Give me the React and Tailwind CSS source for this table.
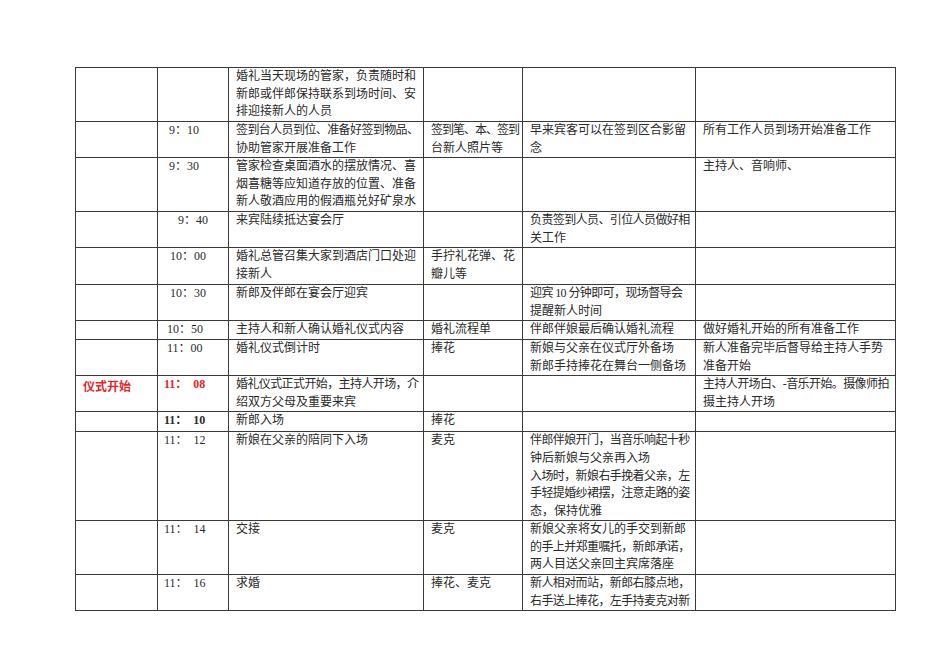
import React from 'react';

const rows = [
  { h: 'h-[54px]', time: '', content: ['婚礼当天现场的管家，负责随时和', '新郎或伴郎保持联系到场时间、安', '排迎接新人的人员'], items: [], note: [], staff: [] },
  { h: 'h-[36px]', time: '9：10', tp: 'pl-[11px]', content: ['签到台人员到位、准备好签到物品、', '协助管家开展准备工作'], items: ['签到笔、本、签到', '台新人照片等'], note: ['早来宾客可以在签到区合影留', '念'], staff: ['所有工作人员到场开始准备工作'] },
  { h: 'h-[53px]', time: '9：30', tp: 'pl-[11px]', content: ['管家检查桌面酒水的摆放情况、喜', '烟喜糖等应知道存放的位置、准备', '新人敬酒应用的假酒瓶兑好矿泉水'], items: [], note: [], staff: ['主持人、音响师、'] },
  { h: 'h-[35px]', time: '9：40', tp: 'pl-[20px]', content: ['来宾陆续抵达宴会厅'], items: [], note: ['负责签到人员、引位人员做好相', '关工作'], staff: [] },
  { h: 'h-[37px]', time: '10：00', tp: 'pl-[12px]', content: ['婚礼总管召集大家到酒店门口处迎', '接新人'], items: ['手拧礼花弹、花', '瓣儿等'], note: [], staff: [] },
  { h: 'h-[35px]', time: '10：30', tp: 'pl-[12px]', content: ['新郎及伴郎在宴会厅迎宾'], items: [], note: ['迎宾 10 分钟即可，现场督导会', '提醒新人时间'], staff: [] },
  { h: 'h-[18px]', time: '10：50', tp: 'pl-[9px]', content: ['主持人和新人确认婚礼仪式内容'], items: ['婚礼流程单'], note: ['伴郎伴娘最后确认婚礼流程'], staff: ['做好婚礼开始的所有准备工作'] },
  { h: 'h-[36px]', time: '11：00', tp: 'pl-[9px]', content: ['婚礼仪式倒计时'], items: ['捧花'], note: ['新娘与父亲在仪式厅外备场', '新郎手持捧花在舞台一侧备场'], staff: ['新人准备完毕后督导给主持人手势', '准备开始'] },
  { h: 'h-[36px]', label: '仪式开始', time: '11：  08', tp: 'pl-[6px]', red: true, bold: true, content: ['婚礼仪式正式开始，主持人开场，介', '绍双方父母及重要来宾'], items: [], note: [], staff: ['主持人开场白、-音乐开始。摄像师拍', '摄主持人开场'] },
  { h: 'h-[20px]', time: '11：  10', tp: 'pl-[6px]', bold: true, content: ['新郎入场'], items: ['捧花'], note: [], staff: [] },
  { h: 'h-[88px]', time: '11：  12', tp: 'pl-[6px]', content: ['新娘在父亲的陪同下入场'], items: ['麦克'], note: ['伴郎伴娘开门，当音乐响起十秒', '钟后新娘与父亲再入场', '入场时，新娘右手挽着父亲，左', '手轻提婚纱裙摆，注意走路的姿', '态，保持优雅'], staff: [] },
  { h: 'h-[54px]', time: '11：  14', tp: 'pl-[6px]', content: ['交接'], items: ['麦克'], note: ['新娘父亲将女儿的手交到新郎', '的手上并郑重嘱托，新郎承诺，', '两人目送父亲回主宾席落座'], staff: [] },
  { h: 'h-[36px]', time: '11：  16', tp: 'pl-[6px]', content: ['求婚'], items: ['捧花、麦克'], note: ['新人相对而站，新郎右膝点地，', '右手送上捧花，左手持麦克对新'], staff: [] },
];

// lines longer than the column allows get squeezed a little, as Word does
const Lines = ({ lines, max, squeeze = 'tracking-[-0.6px]' }) => (
  <>
    {lines.map((l, i) => (
      <div key={i} className={`whitespace-pre ${l.replace(/ /g, '').length >= max ? squeeze : ''}`}>{l}</div>
    ))}
  </>
);

const cell = 'border border-[#3a3a3a] align-top p-0 pl-[7px] overflow-hidden';

export default function App() {
  return (
    <div className="w-[950px] h-[672px] bg-white overflow-hidden pt-[67px] pl-[75px]" style={{ fontFamily: '"Liberation Serif", "Noto Sans CJK SC", serif' }}>
      <table className="border-collapse table-fixed w-[820px] text-[12px] leading-[17.6px] text-[#2a2a2a]">
        <colgroup>
          <col className="w-[82px]" />
          <col className="w-[71px]" />
          <col className="w-[195px]" />
          <col className="w-[99px]" />
          <col className="w-[173px]" />
          <col className="w-[200px]" />
        </colgroup>
        <tbody>
          {rows.map((r, i) => (
            <tr key={i} className={r.h}>
              <td className={cell}>
                {r.label && (
                  <div className="text-[#e3262a] font-bold pt-[1px] whitespace-nowrap" style={{ fontFamily: '"Noto Sans CJK SC", sans-serif' }}>
                    {r.label}
                  </div>
                )}
              </td>
              <td className={`border border-[#3a3a3a] align-top p-0 ${r.tp || ''}`}>
                <div className={`whitespace-pre ${r.red ? 'text-[#e3262a]' : ''} ${r.bold ? 'font-bold' : ''}`}>{r.time}</div>
              </td>
              <td className={cell}><Lines lines={r.content} max={16} /></td>
              <td className={cell}><Lines lines={r.items} max={8} squeeze="tracking-[-1px]" /></td>
              <td className={cell}><Lines lines={r.note} max={14} /></td>
              <td className={cell}><Lines lines={r.staff} max={16} /></td>
            </tr>
          ))}
        </tbody>
      </table>
    </div>
  );
}
